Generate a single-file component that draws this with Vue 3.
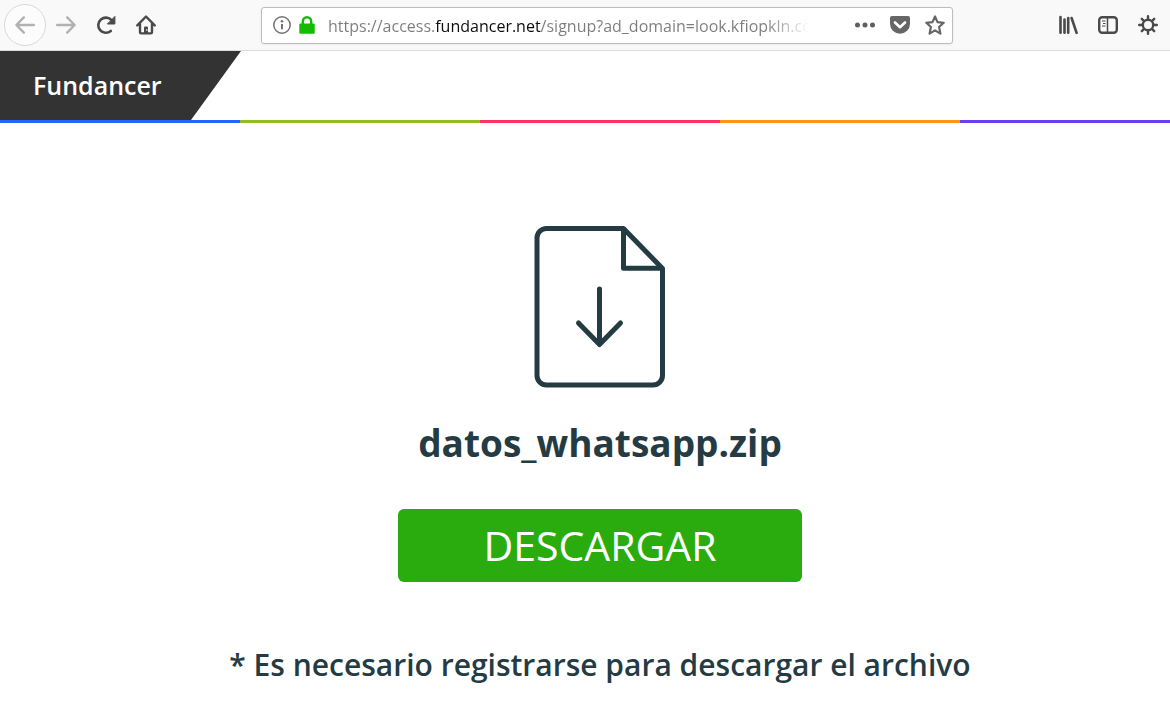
<script setup>
import { ref } from 'vue'

const address = ref('https://access.fundancer.net/signup?ad_domain=look.kfiopkln.com')
const stripes = ['blue', 'green', 'pink', 'orange', 'violet']
</script>

<template>
  <div class="window">
    <header class="toolbar">
      <nav class="nav" aria-label="Navegación">
        <button class="tool back" type="button" aria-label="Atrás">
          <svg width="20" height="18" viewBox="0 0 20 18" fill="none" stroke="#b1b1b1" stroke-width="2.4" stroke-linecap="round" stroke-linejoin="round"><path d="M18.8 9H1.6M8.8 1.4L1.4 9l7.4 7.6" /></svg>
        </button>
        <button class="tool" type="button" aria-label="Adelante">
          <svg width="20" height="18" viewBox="0 0 20 18" fill="none" stroke="#b1b1b1" stroke-width="2.4" stroke-linecap="round" stroke-linejoin="round"><path d="M1.2 9h17.2M11.2 1.4L18.6 9l-7.4 7.6" /></svg>
        </button>
        <button class="tool" type="button" aria-label="Recargar">
          <svg width="20" height="20" viewBox="0 0 20 20" fill="none" stroke="#4a4a4a" stroke-linecap="round" stroke-linejoin="round"><path stroke-width="2.6" d="M14.8 16A7.600 7.600 0 1 1 15.600 5.200" /><path d="M18.900 1.800v7.200h-7.200z" fill="#4a4a4a" stroke-width="1" /></svg>
        </button>
        <button class="tool" type="button" aria-label="Inicio">
          <svg width="20" height="20" viewBox="0 0 20 20" fill="none" stroke="#4a4a4a" stroke-width="2.4" stroke-linecap="round" stroke-linejoin="round"><path d="M1.3 10.4L10 1.5l8.7 8.9M4 8.8v8.4q0 1.2 1.2 1.2h9.6q1.2 0 1.2-1.2V8.800" /><path d="M8 18v-5.500q0-1 1-1h2q1 0 1 1V18z" fill="#4a4a4a" stroke="none" /><path d="M10.800 14.500v1" stroke="#f9f9fa" stroke-width="1" /></svg>
        </button>
      </nav>

      <div class="address">
        <button class="mini" type="button" aria-label="Información del sitio">
          <svg width="18" height="18" viewBox="0 0 18 18" fill="none" stroke="#737373"><circle cx="9" cy="9" r="8.200" stroke-width="1.500" /><path d="M9 8v5.200" stroke-width="2" /><circle cx="9" cy="5.200" r="1.300" fill="#737373" stroke="none" /></svg>
        </button>
        <button class="mini" type="button" aria-label="Conexión segura">
          <svg width="16" height="18" viewBox="0 0 16 18"><path d="M3.800 9V5.400a4.200 4.200 0 0 1 8.400 0V9" fill="none" stroke="#12bc00" stroke-width="2.400" /><rect x="0.300" y="7.600" width="15.400" height="10.200" rx="1" fill="#12bc00" /></svg>
        </button>
        <input v-model="address" class="url" type="text" aria-label="Dirección" spellcheck="false" />
        <div class="actions">
          <button class="mini" type="button" aria-label="Acciones de página">
            <svg width="20" height="6" viewBox="0 0 20 6" fill="#5f5f5f"><circle cx="2.500" cy="3" r="2.500" /><circle cx="10" cy="3" r="2.500" /><circle cx="17.500" cy="3" r="2.500" /></svg>
          </button>
          <button class="mini" type="button" aria-label="Guardar en Pocket">
            <svg width="20" height="18" viewBox="0 0 20 18"><path d="M2 0h16q2 0 2 2v5.800a10 10 0 0 1-20 0V2q0-2 2-2z" fill="#666" /><path d="M5 6.500l5 4.700 5-4.700" fill="none" stroke="#fff" stroke-width="2.600" stroke-linecap="round" stroke-linejoin="round" /></svg>
          </button>
          <button class="mini" type="button" aria-label="Añadir a marcadores">
            <svg width="20" height="20" viewBox="0 0 20 20" fill="none" stroke="#666" stroke-width="2.200" stroke-linejoin="round"><path d="M10 1.500l2.500 5.600 6.200.7-4.600 4.200 1.300 6.600-5.400-3.200-5.400 3.200 1.300-6.600-4.600-4.200 6.200-.7z" /></svg>
          </button>
        </div>
      </div>

      <div class="tools">
        <button class="tool" type="button" aria-label="Catálogo">
          <svg width="20" height="20" viewBox="0 0 20 20" fill="none" stroke="#4a4a4a" stroke-width="2.600" stroke-linecap="round"><path d="M2.500 2v15.800M6.500 4.600v13.200M10.200 3v14.800M13.600 3l5 14.800" /></svg>
        </button>
        <button class="tool" type="button" aria-label="Barra lateral">
          <svg width="20" height="18" viewBox="0 0 20 18" fill="none" stroke="#4a4a4a"><rect x="1.200" y="1.200" width="17.600" height="15.600" rx="3" stroke-width="2.400" /><path d="M9.500 1v16" stroke-width="1.500" /><path d="M4 5h3.500M5 7.500h2.500M4 10h3.500" stroke-width="1" /></svg>
        </button>
        <button class="tool" type="button" aria-label="Ajustes">
          <svg width="20" height="20" viewBox="0 0 20 20" fill="none" stroke="#4a4a4a" stroke-width="2.400" stroke-linecap="round"><circle cx="10" cy="10" r="5.200" /><path d="M10 1.200v3M10 15.800v3M1.200 10h3M15.800 10h3M3.800 3.800l2 2M14.200 14.200l2 2M16.200 3.800l-2 2M5.800 14.200l-2 2" /></svg>
        </button>
      </div>
    </header>

    <div class="site">
      <div class="masthead">
        <a class="brand" href="#">Fundancer</a>
      </div>
      <div class="stripes">
        <span v-for="name in stripes" :key="name" :class="name"></span>
      </div>
      <main class="download">
        <svg class="file" width="132" height="164" viewBox="0 0 132 164" fill="none" stroke="#243b43" stroke-width="5" stroke-linecap="round" stroke-linejoin="round">
          <path d="M89.500 3.500H12.500a9.500 9.500 0 0 0-9.500 9.500v137.500a9.500 9.500 0 0 0 9.500 9.500h106.500a9.500 9.500 0 0 0 9.500-9.500V43.500z" />
          <path d="M89.500 4v39.300h39.300" stroke-linecap="butt" />
          <path d="M65.500 64v53.500M44.500 98l21 21.500 21-21.500" />
        </svg>
        <h1>datos_whatsapp.zip</h1>
        <button class="cta" type="button">DESCARGAR</button>
        <p>* Es necesario registrarse para descargar el archivo</p>
      </main>
    </div>
  </div>
</template>

<style>
body {
  margin: 0;
  background: #fff;
}
</style>

<style scoped>
.window {
  min-height: 100vh;
  overflow: hidden;
  font-family: "Open Sans", "Noto Sans", sans-serif;
}
button {
  padding: 0;
  border: 0;
  background: none;
  font: inherit;
}
svg {
  display: block;
}
.toolbar {
  display: flex;
  align-items: center;
  box-sizing: border-box;
  height: 51px;
  padding: 0 2px 0 4px;
  background: #f9f9fa;
  border-bottom: 1px solid #dcdcdc;
}
.nav,
.tools {
  display: flex;
  align-items: center;
}
.tool {
  display: grid;
  place-items: center;
  width: 40px;
  height: 40px;
}
.back {
  width: 42px;
  height: 42px;
  border: 1px solid #d9d9d9;
  border-radius: 50%;
  background: #fcfcfc;
}
.address {
  display: flex;
  flex: 1;
  align-items: center;
  box-sizing: border-box;
  height: 37px;
  margin: 0 95px;
  padding: 0 7px 0 11px;
  border: 1px solid #bdbdbd;
  border-radius: 3px;
  background: #fff;
  box-shadow: 0 1px 3px rgba(0, 0, 0, 0.06);
}
.mini + .mini {
  margin-left: 8px;
}
.url {
  flex: 1;
  min-width: 0;
  height: 30px;
  margin: 0 40px 0 13px;
  padding: 2px 0 0;
  border: 0;
  outline: 0;
  background: linear-gradient(90deg, #7c7c7c 107px, #0c0c0d 107px 213px, #7c7c7c 213px calc(100% - 50px), transparent calc(100% - 6px));
  background-clip: text;
  color: transparent;
  font: 16px "Open Sans", "Noto Sans", sans-serif;
}
.actions {
  display: flex;
  align-items: center;
}
.actions .mini + .mini {
  margin-left: 15px;
}
.site {
  margin-right: -30px;
}
.masthead {
  display: flex;
  background: #fff;
}
.brand {
  box-sizing: border-box;
  width: 241px;
  padding-left: 33px;
  background: #333;
  clip-path: polygon(0 0, 100% 0, 191px 100%, 0 100%);
  color: #fff;
  font-size: 25px;
  font-weight: 600;
  line-height: 69px;
  text-decoration: none;
}
.stripes {
  display: grid;
  grid-template-columns: repeat(5, 1fr);
  height: 3px;
}
.blue { background: #2962ff; }
.green { background: #93c01f; }
.pink { background: #ff3366; }
.orange { background: #ff9513; }
.violet { background: #6a3df5; }
.download {
  display: flex;
  flex-direction: column;
  align-items: center;
  padding-top: 102px;
  color: #243b43;
  text-align: center;
}
h1 {
  margin: 28px 0 0;
  font-size: 37px;
  font-weight: 700;
  line-height: 52px;
}
.cta {
  height: 73px;
  width: 404px;
  margin-top: 40px;
  padding-bottom: 2px;
  border-radius: 6px;
  background: #2bac0e;
  color: #fff;
  font-size: 41px;
}
p {
  margin: 62px 0 0;
  font-size: 30px;
  font-weight: 600;
  line-height: 42px;
}
</style>
